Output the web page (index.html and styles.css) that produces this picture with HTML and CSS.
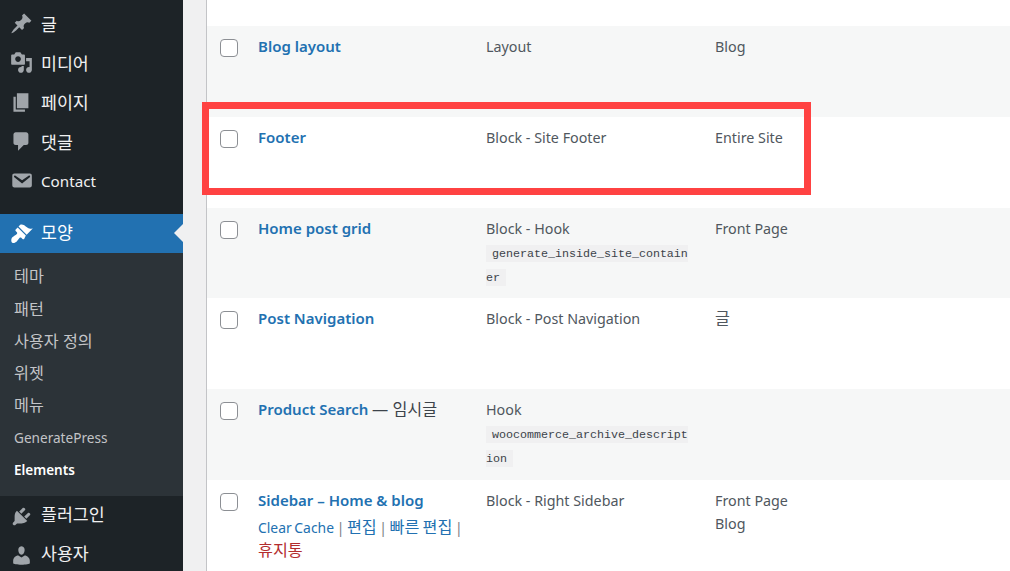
FILE: index.html
```html
<!DOCTYPE html>
<html lang="ko">
<head>
<meta charset="utf-8">
<title>Elements</title>
<link rel="stylesheet" href="styles.css">
</head>
<body>
<div class="page">
  <nav class="sidebar">
    <ul class="menu">
      <li class="item"><svg class="icon" viewBox="0 0 20 20"><path d="M10.44 3.02l1.82-1.82 6.36 6.35-1.83 1.82c-1.05-.68-2.48-.57-3.41.36l-.75.75c-.92.93-1.04 2.35-.35 3.41l-1.83 1.82-2.41-2.41-2.8 2.79c-.42.42-3.38 2.71-3.8 2.29s1.86-3.39 2.28-3.81l2.79-2.79L4.1 9.36l1.83-1.82c1.05.69 2.48.57 3.41-.36l.75-.75c.93-.92 1.04-2.35.35-3.41z"/></svg><span>글</span></li>
      <li class="item"><svg class="icon" viewBox="0 0 20 20"><path d="M13 11V4c0-.55-.45-1-1-1h-1.67L9 1H5L3.67 3H2c-.55 0-1 .45-1 1v7c0 .55.45 1 1 1h10c.55 0 1-.45 1-1zM7 4.5c1.38 0 2.5 1.12 2.5 2.5S8.38 9.5 7 9.5 4.5 8.38 4.5 7 5.62 4.5 7 4.5zM14 6h5v10.5c0 1.38-1.12 2.5-2.5 2.5S14 17.88 14 16.5s1.12-2.5 2.5-2.5c.17 0 .34.02.5.05V9h-3V6zm-4 8.05V13h2v3.5c0 1.38-1.12 2.5-2.5 2.5S7 17.88 7 16.5 8.12 14 9.5 14c.17 0 .34.02.5.05z"/></svg><span>미디어</span></li>
      <li class="item"><svg class="icon" viewBox="0 0 20 20"><path d="M6 15V2h10v13H6zm-1 1h8v2H3V5h2v11z"/></svg><span>페이지</span></li>
      <li class="item"><svg class="icon" viewBox="0 0 20 20"><path d="M5 2h9c1.1 0 2 .9 2 2v7c0 1.1-.9 2-2 2h-2l-5 5v-5H5c-1.1 0-2-.9-2-2V4c0-1.1.9-2 2-2z"/></svg><span>댓글</span></li>
      <li class="item"><svg class="icon" viewBox="0 0 20 20"><path d="M3.87 4h13.25C18.37 4 19 4.59 19 5.79v8.42c0 1.19-.63 1.79-1.88 1.79H3.87c-1.25 0-1.88-.6-1.88-1.79V5.79c0-1.2.63-1.79 1.88-1.79zm6.62 8.6l6.74-5.53c.24-.2.43-.66.13-1.07-.29-.41-.82-.42-1.17-.17l-5.7 3.86L4.8 5.83c-.35-.25-.88-.24-1.17.17-.3.41-.11.87.13 1.07z"/></svg><span class="latin">Contact</span></li>
      <li class="item active raised"><svg class="icon" viewBox="0 0 20 20"><path d="M14.48 11.06L7.41 3.99l1.5-1.5c.5-.56 2.3-.47 3.51.32 1.21.8 1.43 1.28 2.91 2.1 1.18.64 2.45 1.26 4.45.85zm-.71.71L6.7 4.7 4.93 6.47c-.39.39-.39 1.02 0 1.41l1.06 1.06c.39.39.39 1.03 0 1.42-.6.6-1.43 1.11-2.21 1.69-.35.26-.7.53-1.01.84C1.43 13.23.78 15.78 1.4 17.33c.61 1.55 3.14.97 4.47-.36.31-.31.58-.66.84-1.01.58-.78 1.09-1.61 1.69-2.21.39-.39 1.03-.39 1.42 0l1.06 1.06c.39.39 1.02.39 1.41 0z"/></svg><span>모양</span></li>
      <li class="submenu">
        <a class="ko">테마</a>
        <a class="ko">패턴</a>
        <a class="ko">사용자 정의</a>
        <a class="ko">위젯</a>
        <a class="ko">메뉴</a>
        <a>GeneratePress</a>
        <a class="current">Elements</a>
      </li>
      <li class="item raised"><svg class="icon" viewBox="0 0 20 20"><path d="M13.11 4.36L9.87 7.6 8 5.73l3.24-3.24c.35-.34 1.05-.2 1.56.32.52.51.66 1.21.31 1.55zm-8 1.77l.91-1.12 9.01 9.01-1.19.84c-.71.71-2.63 1.16-3.82 1.16H6.14L4.9 17.26c-.59.59-1.54.59-2.12 0-.59-.58-.59-1.53 0-2.12l1.24-1.24v-3.88c0-1.13.4-3.19 1.09-3.89zm7.26 3.97l3.24-3.24c.34-.35 1.04-.21 1.55.31.52.51.66 1.21.31 1.55l-3.24 3.25z"/></svg><span>플러그인</span></li>
      <li class="item raised"><svg class="icon" viewBox="0 0 20 20"><path d="M10 9.25c-2.27 0-2.73-3.44-2.73-3.44C7 4.02 7.82 2 9.97 2c2.16 0 2.98 2.02 2.71 3.81 0 0-.41 3.44-2.68 3.44zm0 2.57L12.72 10c2.39 0 4.52 2.33 4.52 4.53v2.49s-3.65 1.13-7.24 1.13c-3.65 0-7.24-1.13-7.24-1.13v-2.49c0-2.25 1.94-4.48 4.47-4.48z"/></svg><span>사용자</span></li>
    </ul>
  </nav>
  <main class="content">
    <div class="list">
      <div class="spacer"></div>
      <div class="row alt">
        <span class="check"></span>
        <div class="title"><a class="name">Blog layout</a></div>
        <div class="type">Layout</div>
        <div class="loc">Blog</div>
      </div>
      <div class="row">
        <span class="check"></span>
        <div class="title"><a class="name">Footer</a></div>
        <div class="type">Block - Site Footer</div>
        <div class="loc">Entire Site</div>
      </div>
      <div class="row alt">
        <span class="check"></span>
        <div class="title"><a class="name">Home post grid</a></div>
        <div class="type">Block - Hook<br><code>generate_inside_site_container</code></div>
        <div class="loc">Front Page</div>
      </div>
      <div class="row">
        <span class="check"></span>
        <div class="title"><a class="name">Post Navigation</a></div>
        <div class="type">Block - Post Navigation</div>
        <div class="loc"><span class="ko">글</span></div>
      </div>
      <div class="row alt">
        <span class="check"></span>
        <div class="title"><a class="name">Product Search</a> <span class="state">— 임시글</span></div>
        <div class="type">Hook<br><code>woocommerce_archive_description</code></div>
        <div class="loc"></div>
      </div>
      <div class="row">
        <span class="check"></span>
        <div class="title"><a class="name">Sidebar – Home &amp; blog</a>
          <div class="actions"><a>Clear Cache</a> <i>|</i> <a class="ko">편집</a> <i>|</i> <a class="ko">빠른 편집</a> <i>|</i> <a class="ko trash">휴지통</a></div>
        </div>
        <div class="type">Block - Right Sidebar</div>
        <div class="loc">Front Page<br>Blog</div>
      </div>
    </div>
    <div class="highlight"></div>
  </main>
</div>
</body>
</html>
```
FILE: styles.css
```css
* { box-sizing: border-box; }
html, body { margin: 0; height: 100%; overflow: hidden; }
body {
  background: #f0f0f1;
  font-family: "Noto Sans", "Noto Sans CJK KR", sans-serif;
  font-size: 14.3px;
  color: #50575e;
}
.ko { font-size: 16.2px; }
.page { display: flex; height: 571px; }
.sidebar { width: 183px; flex: none; background: #1d2327; overflow: hidden; }
.menu { list-style: none; margin: 0; padding: 4px 0 0; }
.item {
  position: relative;
  display: flex;
  align-items: center;
  gap: 8px;
  height: 39.3px;
  padding-left: 10px;
  color: #f0f0f1;
  font-size: 17.3px;
  line-height: 24px;
}
.item span { position: relative; top: 1px; }
.item.raised span { top: -1px; }
.item .latin { font-size: 15.2px; top: 0; }
.icon { width: 23px; height: 23px; flex: none; fill: #a0a5aa; }
.item.active { background: #2271b1; color: #fff; margin-top: 13.5px; }
.item.active .icon { fill: #fff; }
.item.active::after {
  content: "";
  position: absolute;
  right: 0;
  top: 10px;
  border: 9px solid transparent;
  border-right-color: #f0f0f1;
  border-left-width: 0;
}
.submenu {
  display: flex;
  flex-direction: column;
  background: #2c3338;
  padding: 7px 0 10px;
}
.submenu a {
  display: block;
  height: 32.3px;
  line-height: 32.3px;
  padding-left: 14px;
  color: #c3c4c7;
  font-size: 13.6px;
}
.submenu a.ko { font-size: 16.2px; }
.submenu a.current { color: #fff; font-weight: 600; font-size: 13.5px; }
.content { position: relative; flex: 1; min-width: 0; padding-left: 23px; }
.list { background: #fff; border-left: 1px solid #c3c4c7; height: 571px; overflow: hidden; }
.spacer { height: 26px; }
.row {
  display: grid;
  grid-template-columns: 38px 228px 229px 1fr;
  height: 90.8px;
  padding: 9px 0 0 13px;
  line-height: 22px;
}
.row.alt { background: #f6f7f7; }
.check {
  width: 18px;
  height: 18px;
  margin: 4px 0 0;
  background: #fff;
  border: 1px solid #8c8f94;
  border-radius: 4px;
}
.title { width: 212px; }
.name { color: #2271b1; font-weight: 600; font-size: 15px; }
.state { color: #3c434a; font-size: 16.2px; }
.type { width: 202px; line-height: 23px; }
.loc { line-height: 23px; }
code {
  font-family: "Liberation Mono", monospace;
  font-size: 11.67px;
  line-height: 20px;
  background: #f0f0f1;
  color: #3c434a;
  padding: 2px 6px 1px;
  overflow-wrap: anywhere;
}
.actions { margin-top: 4px; color: #a7aaad; font-size: 13.9px; word-spacing: -1px; }
.actions a { color: #2271b1; }
.actions i { font-style: normal; color: #787c82; }
.actions a.trash { color: #b32d2e; }
.highlight {
  position: absolute;
  left: 19px;
  top: 102px;
  width: 609px;
  height: 93px;
  border: 7px solid #ff4242;
}
```
